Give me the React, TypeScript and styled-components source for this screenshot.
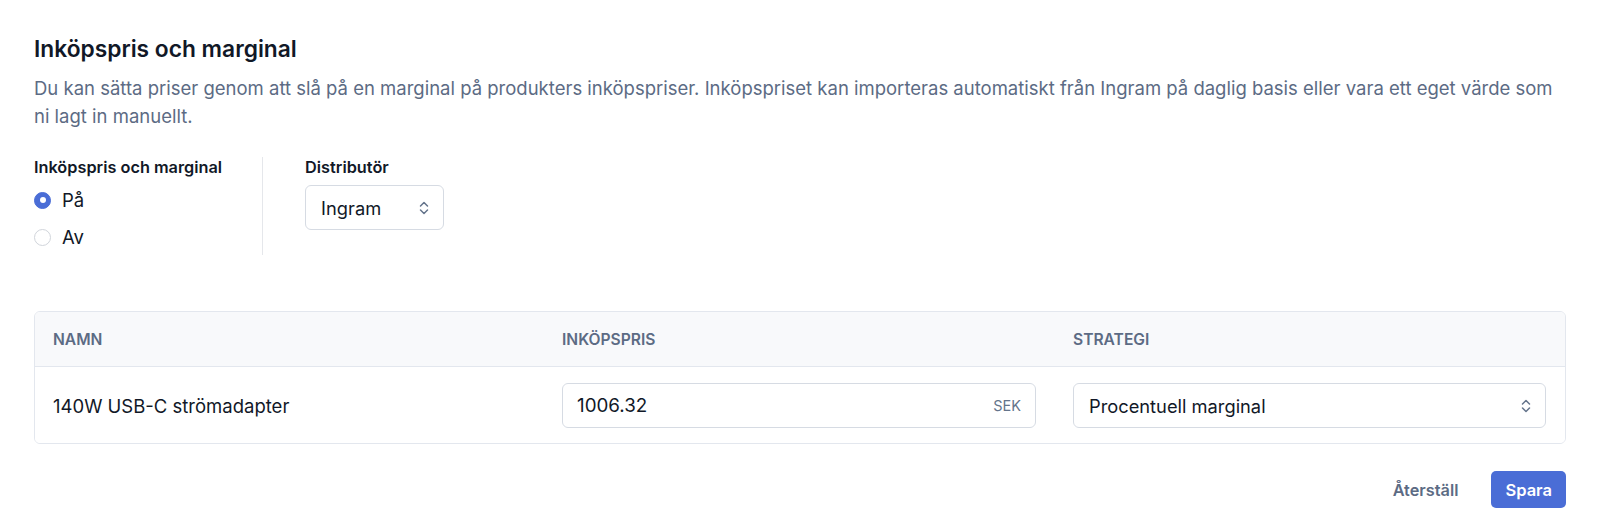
import React from "react";
import styled, { createGlobalStyle } from "styled-components";

const GlobalStyle = createGlobalStyle`
  * { box-sizing: border-box; }
  html, body { margin: 0; padding: 0; background: #ffffff; }
  body { font-family: Inter, "Noto Sans", sans-serif; color: #111827; }
`;

const Page = styled.div`
  padding: 35px 34px 20px 34px;
`;

const Title = styled.h2`
  margin: 0;
  font-size: 22.75px;
  line-height: 28px;
  font-weight: 600;
  color: #111827;
`;

const Description = styled.p`
  margin: 11px 0 0 0;
  font-size: 18.5px;
  line-height: 28px;
  color: #5c6b84;
`;

const Settings = styled.div`
  display: flex;
  margin-top: 27px;
  align-items: stretch;
`;

const SettingGroup = styled.div<{ $divider?: boolean; $first?: boolean }>`
  display: flex;
  flex-direction: column;
  padding: ${(p) => (p.$first ? "0 40px 6px 0" : "0 0 6px 42px")};
  border-right: ${(p) => (p.$divider ? "1px solid #e5e7eb" : "none")};
`;

const FieldLabel = styled.div`
  font-size: 16.3px;
  line-height: 20px;
  font-weight: 600;
  color: #111827;
`;

const RadioList = styled.div`
  display: flex;
  flex-direction: column;
  gap: 13px;
  margin-top: 11px;
`;

const RadioRow = styled.label`
  display: flex;
  align-items: center;
  gap: 11px;
  font-size: 18.5px;
  line-height: 24px;
  color: #111827;
`;

const RadioDot = styled.span<{ $checked?: boolean }>`
  width: 17px;
  height: 17px;
  border-radius: 50%;
  flex-shrink: 0;
  background: ${(p) => (p.$checked ? "#4a6dd6" : "#ffffff")};
  border: 1px solid ${(p) => (p.$checked ? "#4a6dd6" : "#d1d5db")};
  display: flex;
  align-items: center;
  justify-content: center;
  &::after {
    content: "";
    width: 6px;
    height: 6px;
    border-radius: 50%;
    background: #ffffff;
    display: ${(p) => (p.$checked ? "block" : "none")};
  }
`;

const SelectBox = styled.div<{ $width?: string }>`
  display: flex;
  align-items: center;
  justify-content: space-between;
  width: ${(p) => p.$width || "100%"};
  height: 45px;
  padding: 0 14px 0 15px;
  border: 1px solid #d6dbe3;
  border-radius: 6px;
  background: #ffffff;
  font-size: 18.3px;
  color: #111827;
`;

const DistSelect = styled(SelectBox)`
  margin-top: 8px;
`;

const Table = styled.div`
  margin-top: 56px;
  border: 1px solid #e3e7ee;
  border-radius: 6px;
  overflow: hidden;
`;

const TableRow = styled.div<{ $head?: boolean }>`
  display: grid;
  grid-template-columns: 509px 511px 1fr;
  align-items: center;
  background: ${(p) => (p.$head ? "#f8f9fb" : "#ffffff")};
  border-bottom: ${(p) => (p.$head ? "1px solid #e3e7ee" : "none")};
  height: ${(p) => (p.$head ? "55px" : "76px")};
`;

const HeadCell = styled.div`
  padding: 0 18px;
  font-size: 15.6px;
  font-weight: 600;
  text-transform: uppercase;
  color: #5c6b84;
`;

const Cell = styled.div`
  padding: 1px 19px 0 18px;
  font-size: 18.5px;
  color: #111827;
`;

const InputBox = styled.div`
  display: flex;
  align-items: center;
  justify-content: space-between;
  height: 45px;
  padding: 0 14px 0 14px;
  border: 1px solid #d6dbe3;
  border-radius: 6px;
  font-size: 18.8px;
  color: #111827;
`;

const Suffix = styled.span`
  font-size: 14.5px;
  color: #64748b;
`;

const Footer = styled.div`
  display: flex;
  justify-content: flex-end;
  align-items: center;
  gap: 19px;
  margin-top: 27px;
`;

const GhostButton = styled.button`
  border: none;
  background: transparent;
  font-family: inherit;
  font-size: 16.3px;
  font-weight: 600;
  color: #5c6b84;
  padding: 0 14px;
  height: 37px;
`;

const PrimaryButton = styled.button`
  border: none;
  background: #4a6dd6;
  border-radius: 5px;
  font-family: inherit;
  font-size: 16.5px;
  font-weight: 600;
  color: #ffffff;
  padding: 0 14px;
  height: 37px;
`;

const Chevrons = () => (
  <svg width="10" height="14" viewBox="0 0 10 14" fill="none">
    <path d="M1.5 5 L5 1.5 L8.5 5" stroke="#64748b" strokeWidth="1.5" strokeLinecap="round" strokeLinejoin="round" />
    <path d="M1.5 9 L5 12.5 L8.5 9" stroke="#64748b" strokeWidth="1.5" strokeLinecap="round" strokeLinejoin="round" />
  </svg>
);

export default function App() {
  return (
    <>
      <GlobalStyle />
      <Page>
        <Title>Inköpspris och marginal</Title>
        <Description>
          Du kan sätta priser genom att slå på en marginal på produkters inköpspriser. Inköpspriset kan importeras
          automatiskt från Ingram på daglig basis eller vara ett eget värde som ni lagt in manuellt.
        </Description>
        <Settings>
          <SettingGroup $first $divider>
            <FieldLabel>Inköpspris och marginal</FieldLabel>
            <RadioList>
              <RadioRow>
                <RadioDot $checked />
                På
              </RadioRow>
              <RadioRow>
                <RadioDot />
                Av
              </RadioRow>
            </RadioList>
          </SettingGroup>
          <SettingGroup>
            <FieldLabel>Distributör</FieldLabel>
            <DistSelect $width="139px">
              <span>Ingram</span>
              <Chevrons />
            </DistSelect>
          </SettingGroup>
        </Settings>
        <Table>
          <TableRow $head>
            <HeadCell>Namn</HeadCell>
            <HeadCell>Inköpspris</HeadCell>
            <HeadCell>Strategi</HeadCell>
          </TableRow>
          <TableRow>
            <Cell>140W USB-C strömadapter</Cell>
            <Cell>
              <InputBox>
                <span>1006.32</span>
                <Suffix>SEK</Suffix>
              </InputBox>
            </Cell>
            <Cell>
              <SelectBox>
                <span>Procentuell marginal</span>
                <Chevrons />
              </SelectBox>
            </Cell>
          </TableRow>
        </Table>
        <Footer>
          <GhostButton>Återställ</GhostButton>
          <PrimaryButton>Spara</PrimaryButton>
        </Footer>
      </Page>
    </>
  );
}
